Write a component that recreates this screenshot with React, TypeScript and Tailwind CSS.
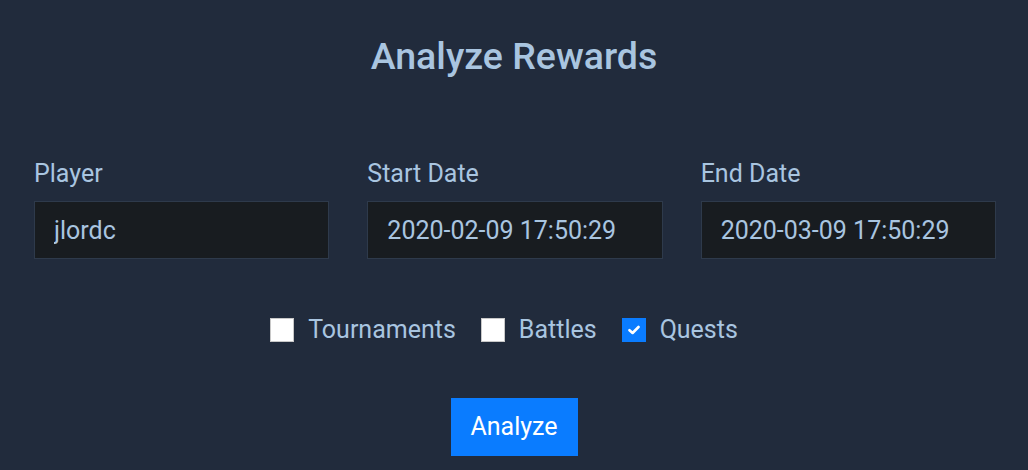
import React from "react";

const font = { fontFamily: "Roboto, 'Noto Sans', sans-serif" };

function Field({ label, value }: { label: string; value: string }) {
  return (
    <div className="flex flex-col">
      <label className="text-[25px] leading-[37px] text-[#a9c5e0] mb-[9px]">{label}</label>
      <input
        readOnly
        value={value}
        className="h-[58px] w-full bg-[#181c20] border border-[#2e3a4b] px-[19px] text-[25px] text-[#a9c5e0] outline-none"
        style={font}
      />
    </div>
  );
}

function Check({ label, checked }: { label: string; checked: boolean }) {
  return (
    <label className="flex items-center gap-[14px]">
      <span
        className={
          checked
            ? "w-[24px] h-[24px] bg-[#0a7cff] flex items-center justify-center"
            : "w-[24px] h-[24px] bg-white border border-[#c8c8c8]"
        }
      >
        {checked && (
          <svg width="12" height="10" viewBox="0 0 12 10">
            <path d="M1.5 5.2 L4.6 8 L10.5 2" stroke="white" strokeWidth="2.6" fill="none" strokeLinecap="round" strokeLinejoin="round" />
          </svg>
        )}
      </span>
      <span className="text-[25px] leading-[37px] text-[#a9c5e0]">{label}</span>
    </label>
  );
}

export default function App() {
  return (
    <div className="w-[1028px] h-[470px] bg-[#212b3c] overflow-hidden" style={font}>
      <h1 className="pt-[34px] text-center text-[37.5px] leading-[45px] font-medium text-[#a9c5e0]">Analyze Rewards</h1>
      <div className="grid grid-cols-3 gap-[38px] pl-[34px] pr-[32px] mt-[76px]">
        <Field label="Player" value="jlordc" />
        <Field label="Start Date" value="2020-02-09 17:50:29" />
        <Field label="End Date" value="2020-03-09 17:50:29" />
      </div>
      <div className="flex justify-center gap-[25px] mt-[52px] pr-[20px]">
        <Check label="Tournaments" checked={false} />
        <Check label="Battles" checked={false} />
        <Check label="Quests" checked={true} />
      </div>
      <div className="flex justify-center mt-[50px]">
        <button className="w-[127px] h-[58px] bg-[#0a7cff] text-white text-[25px]">Analyze</button>
      </div>
    </div>
  );
}
